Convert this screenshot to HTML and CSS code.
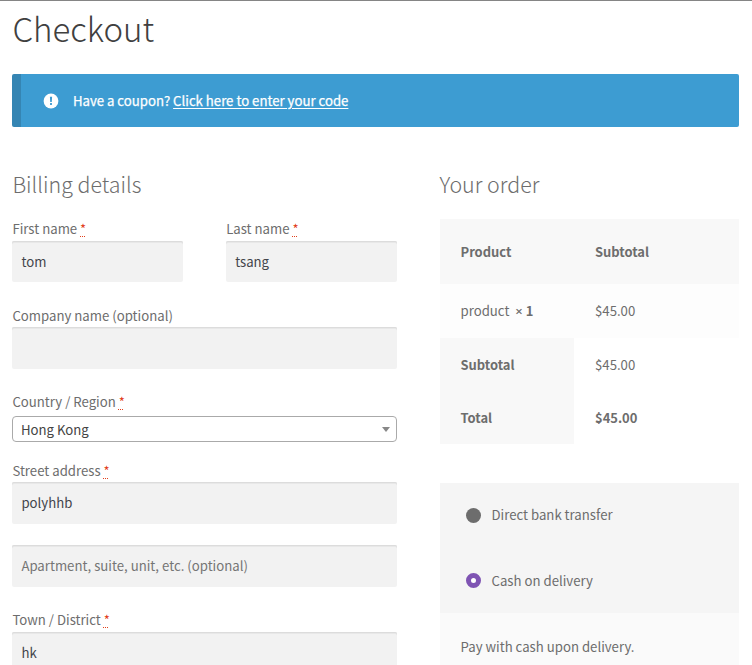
FILE: index.html
```html
<!DOCTYPE html>
<html lang="en">
<head>
<meta charset="utf-8">
<title>Checkout</title>
<link rel="stylesheet" href="styles.css">
</head>
<body>
<main class="page">
  <h1 class="title">Checkout</h1>
  <div class="notice">
    <svg class="notice-icon" viewBox="0 0 16 16" aria-hidden="true"><circle cx="8" cy="8" r="7.4" fill="#fff"/><path d="M6.9 3.8h2.2l-.3 5.1H7.2zM7.1 10.1h1.8v1.9H7.1z" fill="#3d9cd2"/></svg>
    <p class="notice-text">Have a coupon? <a class="notice-link" href="#">Click here to enter your code</a></p>
  </div>
  <div class="columns">
    <section class="billing">
      <h2 class="heading">Billing details</h2>
      <div class="names">
        <div class="field">
          <label class="label" for="first">First name <abbr class="required">*</abbr></label>
          <input class="input" id="first" type="text" value="tom">
        </div>
        <div class="field">
          <label class="label" for="last">Last name <abbr class="required">*</abbr></label>
          <input class="input" id="last" type="text" value="tsang">
        </div>
      </div>
      <div class="field company">
        <label class="label" for="company">Company name (optional)</label>
        <input class="input tall" id="company" type="text">
      </div>
      <div class="field country">
        <label class="label" for="country">Country / Region <abbr class="required">*</abbr></label>
        <div class="select" id="country"><span>Hong Kong</span><i class="arrow"></i></div>
      </div>
      <div class="field street">
        <label class="label" for="street">Street address <abbr class="required">*</abbr></label>
        <input class="input tall" id="street" type="text" value="polyhhb">
        <input class="input tall unit" type="text" placeholder="Apartment, suite, unit, etc. (optional)">
      </div>
      <div class="field town">
        <label class="label" for="town">Town / District <abbr class="required">*</abbr></label>
        <input class="input tall" id="town" type="text" value="hk">
      </div>
    </section>
    <section class="order">
      <h2 class="heading">Your order</h2>
      <div class="table">
        <div class="row head"><strong class="cell">Product</strong><strong class="cell">Subtotal</strong></div>
        <div class="row item"><span class="cell">product&nbsp; <strong><span class="times">×</span> 1</strong></span><span class="cell">$45.00</span></div>
        <div class="row"><strong class="cell shade">Subtotal</strong><span class="cell">$45.00</span></div>
        <div class="row"><strong class="cell shade">Total</strong><strong class="cell">$45.00</strong></div>
      </div>
      <div class="payment">
        <div class="method"><i class="radio"></i><span>Direct bank transfer</span></div>
        <div class="method selected"><i class="radio checked"></i><span>Cash on delivery</span></div>
        <p class="description">Pay with cash upon delivery.</p>
      </div>
    </section>
  </div>
</main>
</body>
</html>
```
FILE: styles.css
```css
* { box-sizing: border-box; }
html { overflow: hidden; }
body {
  margin: 0;
  height: 665px;
  overflow: hidden;
  background: #fff;
  color: #6d6d6d;
  font: 400 13.2px/24px "Noto Sans CJK SC", "Noto Sans", sans-serif;
}
h1, h2, p { margin: 0; }
strong { font-size: 12.95px; }
.page { border-top: 1px solid #858585; padding: 0 13px 0 12.4px; }
.title {
  height: 73px;
  padding-top: 3px;
  color: #404040;
  font-size: 33px;
  font-weight: 300;
  line-height: 48px;
}
.notice {
  display: flex;
  align-items: center;
  height: 53px;
  padding-left: 22px;
  border-left: 9px solid #3585b3;
  border-radius: 2px;
  background: #3d9cd2;
  color: #fff;
}
.notice-icon { width: 16px; height: 16px; margin-right: 13.5px; }
.notice-text { font-size: 13.2px; font-weight: 400; -webkit-text-stroke: 0.25px #fff; }
.notice-link { color: #fff; text-underline-offset: 2px; }
.columns { display: flex; justify-content: space-between; margin-top: 42px; }
.billing { width: 384.5px; }
.order { width: 299.5px; }
.heading {
  height: 50px;
  font-size: 21.4px;
  font-weight: 300;
  line-height: 29px;
}
.names { display: flex; gap: 43px; }
.names .field { flex: 1; }
.field { display: flex; flex-direction: column; }
.label { height: 22px; line-height: 20px; }
.company .label, .country .label, .street .label { line-height: 22px; }
.required {
  color: #e2401c;
  text-decoration: underline dotted 1px;
  text-underline-offset: 2px;
}
.input {
  width: 100%;
  height: 41px;
  padding: 0 9px;
  border: 0;
  border-radius: 2px;
  background: #f2f2f2;
  box-shadow: inset 0 1px 0 #dcdcdc, inset 0 2px 0 #e8e8e8;
  color: #43454b;
  font: inherit;
}
.input::placeholder { color: #757575; opacity: 1; }
.tall { height: 42px; padding-bottom: 1px; }
.company { margin-top: 23px; }
.country { margin-top: 22px; }
.select {
  display: flex;
  align-items: center;
  justify-content: space-between;
  height: 26px;
  margin-top: 3px;
  padding: 1px 6px 0 7.5px;
  border: 1px solid #aaa;
  border-radius: 4px;
  color: #444;
}
.arrow {
  border: 4px solid transparent;
  border-top: 5px solid #888;
  border-bottom: 0;
}
.street { margin-top: 18px; }
.unit { margin-top: 21px; }
.town { margin-top: 23px; }
.row { display: grid; grid-template-columns: 134.5px 1fr; height: 53px; }
.cell { display: block; padding-left: 21px; line-height: 53px; }
.times { font: 600 13px/1 "Open Sans", sans-serif; }
.shade { background: #f8f8f8; }
.head { height: 65px; background: #f8f8f8; }
.head .cell { line-height: 65px; }
.item { height: 54px; background: #fdfdfd; }
.item .cell { line-height: 54px; }
.payment { margin-top: 39px; background: #f5f5f5; }
.method { display: flex; align-items: center; height: 65px; padding: 0 0 1px 26.5px; }
.selected { padding-bottom: 0; }
.selected span { padding-top: 1px; }
.radio { width: 15px; height: 15px; margin-right: 10.5px; border-radius: 50%; background: #6d6d6d; }
.checked { border: 5px solid #7f54b3; background: #fff; }
.description { height: 66px; padding-left: 21px; background: #fafafa; line-height: 67px; }
```
